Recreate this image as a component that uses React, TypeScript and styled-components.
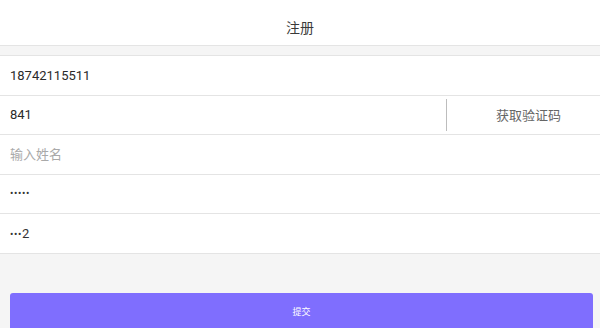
import styled, { createGlobalStyle } from "styled-components";

const GlobalStyle = createGlobalStyle`
  html, body {
    margin: 0;
    padding: 0;
    background: #f5f5f5;
    font-family: Roboto, "Noto Sans CJK SC", sans-serif;
  }
  * { box-sizing: border-box; }
`;

const Page = styled.div`
  width: 600px;
  height: 328px;
  overflow: hidden;
  background: #f5f5f5;
  display: flex;
  flex-direction: column;

  & > * {
    flex-shrink: 0;
  }
`;

const Header = styled.header`
  height: 46px;
  background: #fff;
  border-bottom: 1px solid #e4e4e4;
  display: flex;
  align-items: center;
  justify-content: center;
  font-size: 14px;
  color: #3a3a3a;
  padding-top: 8px;
`;

const Form = styled.div`
  margin-top: 9px;
  background: #fff;
  border-top: 1px solid #e4e4e4;
  display: flex;
  flex-direction: column;
`;

const Row = styled.div`
  height: 39.5px;
  border-bottom: 1px solid #e4e4e4;
  display: flex;
  align-items: center;
`;

const Field = styled.input`
  flex: 1;
  min-width: 0;
  height: 100%;
  border: none;
  outline: none;
  background: transparent;
  padding: 0 10px;
  font-family: Roboto, "Noto Sans CJK SC", sans-serif;
  font-size: 13px;
  color: #2a2a2a;

  &::placeholder {
    color: #a9a9a9;
  }
`;

const Masked = styled.span`
  padding: 0 10px;
  font-family: Roboto, sans-serif;
  color: #333;
  display: flex;
  align-items: baseline;
`;

const Dots = styled.span`
  font-size: 10px;
  letter-spacing: 0.6px;
`;

const Tail = styled.span`
  font-size: 13px;
`;

const CodeButton = styled.button`
  width: 154px;
  height: 32px;
  border: none;
  border-left: 1px solid #bdbdbd;
  background: transparent;
  font-family: Roboto, "Noto Sans CJK SC", sans-serif;
  font-size: 13px;
  color: #666;
  padding: 0 0 0 10px;
  cursor: pointer;
`;

const Footer = styled.div`
  padding: 39px 7px 0 10px;
`;

const Submit = styled.button`
  width: 100%;
  height: 40px;
  border: none;
  border-radius: 3px;
  background: #7f6efe;
  color: #fff;
  font-family: "Noto Sans CJK SC", sans-serif;
  font-size: 9px;
  padding-bottom: 3px;
  cursor: pointer;
`;

export default function App() {
  return (
    <>
      <GlobalStyle />
      <Page>
        <Header>注册</Header>
        <Form>
          <Row>
            <Field defaultValue="18742115511" />
          </Row>
          <Row>
            <Field defaultValue="841" />
            <CodeButton>获取验证码</CodeButton>
          </Row>
          <Row>
            <Field placeholder="输入姓名" />
          </Row>
          <Row>
            <Masked>
              <Dots>•••••</Dots>
            </Masked>
          </Row>
          <Row>
            <Masked>
              <Dots>•••</Dots>
              <Tail>2</Tail>
            </Masked>
          </Row>
        </Form>
        <Footer>
          <Submit>提交</Submit>
        </Footer>
      </Page>
    </>
  );
}
